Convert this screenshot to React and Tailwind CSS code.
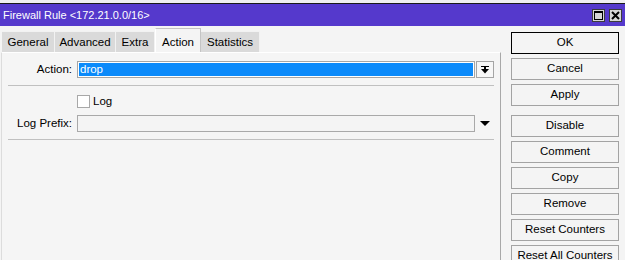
import React from 'react';

const font = { fontFamily: '"Liberation Sans", Arial, sans-serif' };

const tabs = [
  { label: 'General', w: 'w-[53px]' },
  { label: 'Advanced', w: 'w-[61px]' },
  { label: 'Extra', w: 'w-[39px]' },
  { label: 'Action', w: 'w-[46px]', active: true },
  { label: 'Statistics', w: 'w-[59px]' },
];

const buttons = [
  ['OK', 'Cancel', 'Apply'],
  ['Disable', 'Comment', 'Copy', 'Remove', 'Reset Counters', 'Reset All Counters'],
];

function TitleBox({ children }) {
  return (
    <div className="w-[13px] h-[13px] border border-[#3c3c3c] bg-[#d6d6d6] flex items-center justify-center">
      {children}
    </div>
  );
}

function Btn({ label, focused }) {
  return (
    <div
      className={`h-[22px] w-[108px] flex items-center justify-center bg-[#f4f4f4] text-[11.5px] border ${
        focused ? 'border-black' : 'border-[#a3a3a3]'
      }`}
    >
      {label}
    </div>
  );
}

export default function App() {
  return (
    <div className="w-[625px] h-[260px] overflow-hidden bg-[#f4f4f4] text-[11px] text-black flex flex-col" style={font}>
      <div className="h-[3px] bg-[#f0f0f0]" />
      <div className="h-px bg-[#1a1a1a]" />
      {/* title bar */}
      <div className="h-[22px] bg-[#5539cc] flex items-center justify-between pl-[3px] pr-[3px]">
        <span className="text-white text-[11px]">Firewall Rule &lt;172.21.0.0/16&gt;</span>
        <div className="flex gap-[4px]">
          <TitleBox>
            <svg width="9" height="9" viewBox="0 0 9 9">
              <rect x="0.5" y="0.5" width="8" height="8" fill="none" stroke="#000" />
              <rect x="0" y="0" width="9" height="2" fill="#000" />
            </svg>
          </TitleBox>
          <TitleBox>
            <svg width="9" height="9" viewBox="0 0 9 9">
              <path d="M1 1 L8 8 M8 1 L1 8" stroke="#000" strokeWidth="2" />
            </svg>
          </TitleBox>
        </div>
      </div>

      <div className="flex flex-1 min-h-0">
        {/* left: tabs + panel */}
        <div className="w-[501px] flex flex-col">
          <div className="h-[26px] flex items-end pl-[2px] pt-[2px] text-[11.5px]">
            {tabs.map((t) =>
              t.active ? (
                <div
                  key={t.label}
                  className={`${t.w} h-[24px] bg-[#f4f4f4] border-t border-r border-[#c4c4c4] border-l border-l-white flex items-start justify-center pt-[5px]`}
                >
                  {t.label}
                </div>
              ) : (
                <div
                  key={t.label}
                  className={`${t.w} h-[21px] bg-[#dadada] border-r border-t border-[#f2f2f2] flex items-center justify-center pt-[2px]`}
                >
                  {t.label}
                </div>
              )
            )}
          </div>
          <div className="flex-1 ml-px border-t border-t-white border-l border-l-[#dcdcdc] border-r border-r-[#a8a8a8] bg-[#f5f5f5] text-[11.5px]">
            {/* Action row */}
            <div className="flex items-center mt-[8px] h-[17px]">
              <div className="w-[70px] text-right">Action:</div>
              <div className="ml-[5px] w-[398px] h-[17px] border border-[#a5a5a5] bg-white p-px">
                <div className="h-full bg-[#0b8afa] text-white flex items-center pl-[1px] leading-none">drop</div>
              </div>
              <div className="ml-px w-[18px] h-[17px] border border-[#a5a5a5] bg-[#f7f7f7] flex items-center justify-center">
                <svg width="8" height="8" viewBox="0 0 8 8">
                  <rect x="0" y="0" width="8" height="1" fill="#000" />
                  <rect x="3" y="1" width="2" height="2" fill="#000" />
                  <polygon points="0,3 8,3 4,7.5" fill="#000" />
                </svg>
              </div>
            </div>
            <div className="mt-[7px] ml-[6px] w-[486px] h-px bg-[#c0c0c0]" />

            {/* Log checkbox */}
            <div className="flex items-center mt-[9px] h-[13px]">
              <div className="ml-[75px] w-[13px] h-[13px] border border-[#a8a8a8] bg-white" />
              <span className="ml-[3px]">Log</span>
            </div>

            {/* Log prefix */}
            <div className="flex items-center mt-[7px] h-[17px]">
              <div className="w-[70px] text-right">Log Prefix:</div>
              <div className="ml-[5px] w-[398px] h-[17px] border border-[#a9a9a9] bg-[#f4f4f4]" />
              <div className="ml-px w-[18px] h-[17px] flex items-center justify-center">
                <svg width="10" height="5" viewBox="0 0 10 5">
                  <polygon points="0,0 10,0 5,5" fill="#000" />
                </svg>
              </div>
            </div>
            <div className="mt-[7px] ml-[6px] w-[486px] h-px bg-[#c0c0c0]" />
          </div>
        </div>

        {/* right: buttons */}
        <div className="flex-1 pl-[10px] pt-[6px] flex flex-col gap-[9px]">
          {buttons.map((group, gi) => (
            <div key={gi} className="flex flex-col gap-[4px]">
              {group.map((b) => (
                <Btn key={b} label={b} focused={b === 'OK'} />
              ))}
            </div>
          ))}
        </div>
      </div>
    </div>
  );
}
